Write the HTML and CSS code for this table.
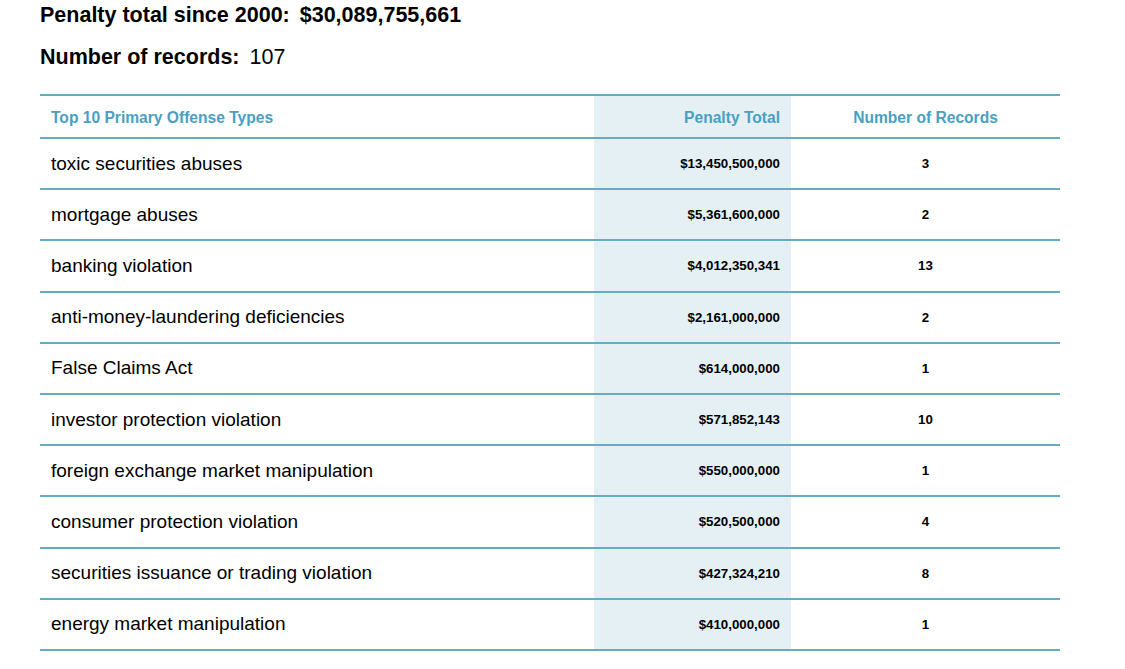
FILE: index.html
```html
<!DOCTYPE html>
<html>
<head>
<meta charset="utf-8">
<link rel="stylesheet" href="styles.css">
</head>
<body>
<div class="page">
  <div class="summary">
    <p class="stat"><span class="label">Penalty total since 2000:</span> <span class="value bold">$30,089,755,661</span></p>
    <p class="stat"><span class="label">Number of records:</span> <span class="value">107</span></p>
  </div>
  <table class="offenses">
    <thead>
      <tr>
        <th class="c-type">Top 10 Primary Offense Types</th>
        <th class="c-total">Penalty Total</th>
        <th class="c-count">Number of Records</th>
      </tr>
    </thead>
    <tbody>
      <tr><td class="c-type">toxic securities abuses</td><td class="c-total">$13,450,500,000</td><td class="c-count">3</td></tr>
      <tr><td class="c-type">mortgage abuses</td><td class="c-total">$5,361,600,000</td><td class="c-count">2</td></tr>
      <tr><td class="c-type">banking violation</td><td class="c-total">$4,012,350,341</td><td class="c-count">13</td></tr>
      <tr><td class="c-type">anti-money-laundering deficiencies</td><td class="c-total">$2,161,000,000</td><td class="c-count">2</td></tr>
      <tr><td class="c-type">False Claims Act</td><td class="c-total">$614,000,000</td><td class="c-count">1</td></tr>
      <tr><td class="c-type">investor protection violation</td><td class="c-total">$571,852,143</td><td class="c-count">10</td></tr>
      <tr><td class="c-type">foreign exchange market manipulation</td><td class="c-total">$550,000,000</td><td class="c-count">1</td></tr>
      <tr><td class="c-type">consumer protection violation</td><td class="c-total">$520,500,000</td><td class="c-count">4</td></tr>
      <tr><td class="c-type">securities issuance or trading violation</td><td class="c-total">$427,324,210</td><td class="c-count">8</td></tr>
      <tr><td class="c-type">energy market manipulation</td><td class="c-total">$410,000,000</td><td class="c-count">1</td></tr>
    </tbody>
  </table>
</div>
</body>
</html>
```
FILE: styles.css
```css
html, body {
  margin: 0;
  padding: 0;
  background: #ffffff;
}
body {
  font-family: "Liberation Sans", Arial, sans-serif;
  color: #000;
}
.page {
  padding: 3px 65px 0 40px;
}
.summary {
  margin-bottom: 25px;
}
.stat {
  margin: 0;
  font-size: 21.5px;
  line-height: 24px;
}
.stat + .stat {
  margin-top: 18px;
}
.label {
  font-weight: bold;
  margin-right: 4px;
}
.value.bold {
  font-weight: bold;
}
.offenses {
  width: 1020px;
  border-collapse: collapse;
  table-layout: fixed;
}
.offenses th,
.offenses td {
  padding: 0 11px;
  vertical-align: middle;
}
.offenses thead tr {
  border-top: 2px solid #64abc6;
  border-bottom: 2px solid #64abc6;
}
.offenses th {
  height: 39px;
  padding-top: 2px;
  font-size: 15.6px;
  line-height: 18px;
  font-weight: bold;
  color: #4a9fc3;
  text-align: left;
}
.offenses tbody tr {
  border-bottom: 2px solid #64abc6;
}
.offenses td {
  height: 49.2px;
}
.c-type {
  width: 532px;
  font-size: 19px;
}
.offenses th.c-type,
.offenses th.c-total,
.offenses th.c-count {
  font-size: 15.6px;
}
.c-total {
  width: 175px;
  background: #e4f0f3;
  text-align: right !important;
  font-size: 13.3px;
  font-weight: bold;
}
.c-count {
  text-align: center !important;
  font-size: 13.3px;
  font-weight: bold;
}
```
